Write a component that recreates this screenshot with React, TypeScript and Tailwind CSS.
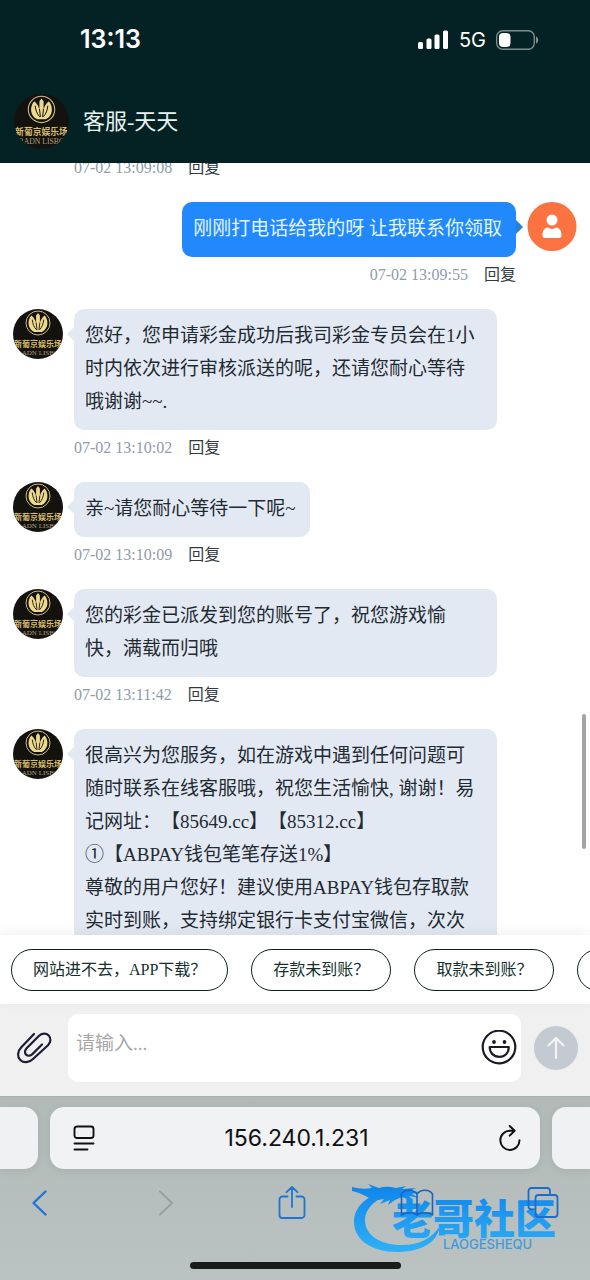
/**
 * Customer service chat, shown inside a mobile browser shell.
 */

import React from 'react';

type Message = {
    id: string;
    from: 'agent' | 'user';
    lines: string[];
    time: string;
};

const messages: Message[] = [
    {
        id: 'm1',
        from: 'user',
        lines: ['刚刚打电话给我的呀 让我联系你领取'],
        time: '07-02 13:09:55',
    },
    {
        id: 'm2',
        from: 'agent',
        lines: ['您好，您申请彩金成功后我司彩金专员会在1小时内依次进行审核派送的呢，还请您耐心等待哦谢谢~~.'],
        time: '07-02 13:10:02',
    },
    {
        id: 'm3',
        from: 'agent',
        lines: ['亲~请您耐心等待一下呢~'],
        time: '07-02 13:10:09',
    },
    {
        id: 'm4',
        from: 'agent',
        lines: ['您的彩金已派发到您的账号了，祝您游戏愉快，满载而归哦'],
        time: '07-02 13:11:42',
    },
    {
        id: 'm5',
        from: 'agent',
        lines: [
            '很高兴为您服务，如在游戏中遇到任何问题可随时联系在线客服哦，祝您生活愉快, 谢谢！易记网址：【85649.cc】【85312.cc】',
            '①【ABPAY钱包笔笔存送1%】',
            '尊敬的用户您好！建议使用ABPAY钱包存取款实时到账，支持绑定银行卡支付宝微信，次次',
        ],
        time: '',
    },
];

const quickQuestions = ['网站进不去，APP下载？', '存款未到账？', '取款未到账？'];

// ============================================================================
// AVATARS
// ============================================================================

function AgentAvatar({ className }: { className: string }) {
    return (
        <svg viewBox="0 0 50 50" className={`shrink-0 rounded-full ${className}`} aria-hidden="true">
            <defs>
                <linearGradient id="gold" x1="0" y1="0" x2="0" y2="1">
                    <stop offset="0" stopColor="#e9d48c" />
                    <stop offset="1" stopColor="#f0dc8e" />
                </linearGradient>
            </defs>
            <rect width="50" height="50" fill="#14120f" />
            <circle cx="25" cy="14" r="12" fill="none" stroke="#cdbb85" strokeWidth="1" />
            <path
                d="M18.300 6.500c-4.300 5-3.800 13.500 3 16.500h7.400c6.800-3 7.300-11.500 3-16.500-2.700 2-4 4.500-4.800 7.500V6.500L25 4l-1.900 2.500V14c-.8-3-2.100-5.500-4.800-7.500z"
                fill="url(#gold)"
            />
            <path
                d="M19.300 11c.4 4 1.600 7 3.900 9.500M30.700 11c-.4 4-1.600 7-3.900 9.500M23.200 14l.8 6.500M26.800 14l-.8 6.500"
                fill="none"
                stroke="#14120f"
                strokeWidth="0.900"
                strokeLinecap="round"
            />
            <text
                x="25"
                y="37.500"
                textAnchor="middle"
                fontSize="8"
                fill="#d8bd6c"
                className="font-['Noto_Sans_CJK_SC',sans-serif] font-bold"
            >
                新葡京娱乐场
            </text>
            <text
                x="25"
                y="45.500"
                textAnchor="middle"
                fontSize="7"
                fill="#b3a274"
                className="font-['Liberation_Serif',serif]"
            >
                RADN LISBO
            </text>
        </svg>
    );
}

function UserAvatar() {
    return (
        <svg viewBox="0 0 50 50" className="size-[50px] shrink-0" aria-hidden="true">
            <circle cx="25" cy="24.500" r="24.500" fill="#fb7340" />
            <circle cx="25" cy="18" r="5.500" fill="#fff" />
            <path d="M15.500 33c0-5 2.800-7.500 5.500-7.500 1 .9 2.400 1.400 4 1.400s3-.5 4-1.400c2.700 0 5.500 2.500 5.500 7.500 0 2-.8 3-2.500 3H18c-1.700 0-2.500-1-2.500-3z" fill="#fff" />
        </svg>
    );
}

// ============================================================================
// STATUS BAR + HEADER
// ============================================================================

function StatusBar() {
    return (
        <div className="flex h-20 items-center justify-between pr-[51px] pl-20 font-['Inter',sans-serif] text-white">
            <span className="text-[25px] font-semibold">13:13</span>
            <div className="flex items-center gap-[10px]">
                <svg viewBox="0 0 31 20" className="h-5 w-[31px]" fill="#fff" aria-hidden="true">
                    <rect x="0" y="12" width="5" height="7" rx="1.500" />
                    <rect x="8.500" y="8.500" width="5" height="10.500" rx="1.500" />
                    <rect x="16.500" y="4.500" width="5" height="14.500" rx="1.500" />
                    <rect x="25" y="0.500" width="5" height="18.500" rx="1.500" />
                </svg>
                <span className="text-xl">5G</span>
                <svg viewBox="0 0 43 20" className="h-5 w-[43px]" aria-hidden="true">
                    <rect x="0.700" y="0.700" width="37.600" height="18.600" rx="6" fill="none" stroke="#7c8d8c" strokeWidth="1.400" />
                    <path d="M40 6.500c3 1 3 6 0 7z" fill="#7c8d8c" />
                    <rect x="3" y="3" width="11.500" height="14" rx="4" fill="#fff" />
                </svg>
            </div>
        </div>
    );
}

function ChatHeader() {
    return (
        <header className="shrink-0 bg-[#042223]">
            <StatusBar />
            <div className="flex h-[83px] items-center gap-[14px] px-[14px]">
                <AgentAvatar className="size-[55px]" />
                <h1 className="text-[22px] text-[#e6f3ef]">客服-天天</h1>
            </div>
        </header>
    );
}

// ============================================================================
// MESSAGES
// ============================================================================

function MessageMeta({ time, align }: { time: string; align: string }) {
    return (
        <div className={`flex items-center gap-4 text-base leading-[22px] ${align}`}>
            <time className="text-[#8f9bab]">{time}</time>
            <button className="text-[#333b40]">回复</button>
        </div>
    );
}

function MessageRow({ message }: { message: Message }) {
    const isUser = message.from === 'user';

    return (
        <article className={`flex items-start gap-[11px] ${isUser ? 'flex-row-reverse' : ''}`}>
            {isUser ? <UserAvatar /> : <AgentAvatar className="size-[50px]" />}
            <div className="max-w-[423px] min-w-0">
                <div
                    className={`relative rounded-[10px] pt-[10px] pr-[14px] pb-3 pl-[11px] text-[19px] leading-[33px] ${isUser ? 'bg-[#2189fb] text-[#e2f6ff]' : 'bg-[#e3e9f2] text-[#1f2b33]'
                        }`}
                >
                    <span
                        className={`absolute top-[18px] border-y-[7px] border-transparent ${isUser ? 'left-full border-l-[7px] border-l-[#2b7fd6]' : 'right-full border-r-[7px] border-r-[#e3e9f2]'
                            }`}
                    />
                    {message.lines.map((line) => (
                        <p key={line}>{line}</p>
                    ))}
                </div>
                {message.time ? (
                    <div className="pt-[7px]">
                        <MessageMeta time={message.time} align={isUser ? 'justify-end' : ''} />
                    </div>
                ) : null}
            </div>
        </article>
    );
}

function MessageList() {
    return (
        <main className="relative min-h-0 flex-1 overflow-hidden bg-white">
            <div className="-mt-[6px] flex flex-col gap-[23px] px-[13px]">
                <div className="pl-[61px]">
                    <MessageMeta time="07-02 13:09:08" align="" />
                </div>
                {messages.map((message) => (
                    <MessageRow key={message.id} message={message} />
                ))}
            </div>
            <span className="absolute right-1 bottom-[86px] h-[135px] w-1 rounded-full bg-[#a3a3a3]" />
        </main>
    );
}

// ============================================================================
// QUICK QUESTIONS + COMPOSER
// ============================================================================

function QuickQuestions() {
    return (
        <nav
            aria-label="常见问题"
            className="relative flex shrink-0 gap-[23px] overflow-hidden bg-white pt-[14px] pb-[13px] pl-[11px] shadow-[0_-3px_12px_rgba(0,0,0,0.06)]"
        >
            {quickQuestions.map((question) => (
                <button
                    key={question}
                    className="h-[42px] shrink-0 rounded-full border border-[#10201f] px-[21px] text-base text-[#12302e]"
                >
                    {question}
                </button>
            ))}
            <button aria-label="更多" className="h-[42px] w-[140px] shrink-0 rounded-full border border-[#10201f]" />
        </nav>
    );
}

function Composer() {
    return (
        <form className="flex h-[92px] shrink-0 items-center bg-[#f0f0f0] pr-3 pb-1 pl-4" onSubmit={(e) => e.preventDefault()}>
            <button type="button" aria-label="附件" className="shrink-0">
                <svg
                    viewBox="0 0 36 34"
                    className="h-[34px] w-9"
                    fill="none"
                    stroke="#1d1d35"
                    strokeWidth="2.200"
                    strokeLinecap="round"
                    strokeLinejoin="round"
                >
                    <path d="M18 3 5.300 16.200c-4 4.200-4.200 9.600-1 12.800 3.300 3.200 8.700 3 12.700-1L32 14.200c3-3 3.200-7.200.7-9.800-2.600-2.600-6.900-2.400-9.900.6L10.600 17.300c-2 2-2.100 4.700-.5 6.300s4.300 1.400 6.300-.5L26 13.500" />
                </svg>
            </button>
            <div className="ml-4 flex h-[68px] flex-1 items-center rounded-[10px] bg-white pr-1 pl-2">
                <input
                    type="text"
                    aria-label="消息"
                    placeholder="请输入..."
                    className="h-full w-full min-w-0 flex-1 pb-2 text-[19px] outline-none placeholder:text-[#a6a6a6]"
                />
                <button type="button" aria-label="表情" className="shrink-0">
                    <svg viewBox="0 0 36 36" className="size-9" fill="none" stroke="#1b1b28" strokeWidth="2.200" strokeLinejoin="round">
                        <circle cx="18" cy="17" r="16.300" />
                        <circle cx="13" cy="12" r="1.900" fill="#1b1b28" stroke="none" />
                        <circle cx="23.500" cy="12" r="1.900" fill="#1b1b28" stroke="none" />
                        <path d="M8.700 17h19.100c0 6-4 9.800-9.500 9.800S8.700 23 8.700 17z" />
                    </svg>
                </button>
            </div>
            <button
                type="submit"
                aria-label="发送"
                className="ml-[13px] flex size-11 shrink-0 items-center justify-center rounded-full bg-[#c3cad2]"
            >
                <svg viewBox="0 0 24 24" className="size-6" fill="none" stroke="#f2f4f6" strokeWidth="2.200" strokeLinecap="round" strokeLinejoin="round">
                    <path d="M12 22V2M4.500 9.500 12 2l7.500 7.500" />
                </svg>
            </button>
        </form>
    );
}

// ============================================================================
// BROWSER CHROME
// ============================================================================

function AddressBar() {
    return (
        <div className="flex h-[62px] gap-3">
            <div className="w-[38px] shrink-0 rounded-r-[14px] bg-[#eff1f2] shadow-[0_2px_8px_rgba(0,0,0,0.08)]" />
            <div className="flex min-w-0 flex-1 items-center justify-between rounded-[14px] bg-[#f0f2f3] pr-[18px] pl-[23px] shadow-[0_2px_8px_rgba(0,0,0,0.08)]">
                <button aria-label="页面设置">
                    <svg viewBox="0 0 22 26" className="h-[26px] w-[22px]" fill="none" stroke="#111" strokeWidth="1.900" strokeLinecap="round">
                        <rect x="1.500" y="1.500" width="19" height="11.500" rx="2.500" />
                        <path d="M1.500 18.500h19M1.500 24.500h13" />
                    </svg>
                </button>
                <span className="font-['Inter',sans-serif] text-[23px] text-[#111]">156.240.1.231</span>
                <button aria-label="刷新">
                    <svg viewBox="0 0 24 26" className="h-[26px] w-6" fill="none" stroke="#111" strokeWidth="2" strokeLinecap="round" strokeLinejoin="round">
                        <path d="M21.500 15.200A9.600 9.600 0 1 1 12 5.700h4.500M11.700 1l4.900 4.700-4.900 4.900" />
                    </svg>
                </button>
            </div>
            <div className="w-[38px] shrink-0 rounded-l-[14px] bg-[#eff1f2] shadow-[0_2px_8px_rgba(0,0,0,0.08)]" />
        </div>
    );
}

function Watermark() {
    return (
        <div className="pointer-events-none absolute right-3 bottom-[26px] h-[72px] w-[226px]">
            <svg viewBox="0 0 226 72" className="size-full" aria-hidden="true">
                <defs>
                    <linearGradient id="wm" x1="0" y1="0" x2="0" y2="70" gradientUnits="userSpaceOnUse">
                        <stop offset="0.100" stopColor="#1187ec" />
                        <stop offset="1" stopColor="#2fb0f6" />
                    </linearGradient>
                </defs>
                <g fill="url(#wm)">
                    <path d="M50 7C20 8 2 22 2 40c0 18 18 30 43 30 22 0 40-8 43-26-8 12-20 19-38 19C28 63 13 53 13 38c0-10 8-19 22-25z" />
                    <path d="M0 5c8 2 13 2 20 1l-4-4 11 4c6-2 12-1 17 0l10-2-4 3 14-1-6 3 10 1-8 2 7 4-10-2 4 5-11-4-7 3-7 5 2-5-10 4 4-5-12 2c-4-5-12-8-20-10z" />
                    <text x="40" y="52" fontSize="41" className="font-['Noto_Sans_CJK_SC',sans-serif] font-black">
                        老哥社区
                    </text>
                </g>
                <text x="91" y="67" fontSize="13" fill="#3f9bdc" className="font-['Inter',sans-serif] font-medium">
                    LAOGESHEQU
                </text>
            </svg>
        </div>
    );
}

function BrowserToolbar() {
    return (
        <div className="relative flex items-center justify-between pt-4 pr-[30px] pl-[23px] text-[#1f74d4]">
            <button aria-label="后退" className="flex w-[34px] justify-center">
                <svg viewBox="0 0 18 36" className="h-9 w-[18px]" fill="none" stroke="currentColor" strokeWidth="2.400" strokeLinecap="round" strokeLinejoin="round">
                    <path d="M14.500 6.500 2.500 18l12 11.500" />
                </svg>
            </button>
            <button aria-label="前进" className="flex w-[34px] justify-center text-[#98a1a0]">
                <svg viewBox="0 0 18 36" className="h-9 w-[18px]" fill="none" stroke="currentColor" strokeWidth="2" strokeLinecap="round" strokeLinejoin="round">
                    <path d="m3 6.500 12 11.500-12 11.500" />
                </svg>
            </button>
            <button aria-label="分享" className="flex w-[34px] justify-center">
                <svg viewBox="0 0 28 36" className="h-9 w-7" fill="none" stroke="currentColor" strokeWidth="1.800" strokeLinecap="round" strokeLinejoin="round">
                    <path d="M9.500 11.500H4.500a3 3 0 0 0-3 3V30a3 3 0 0 0 3 3h19a3 3 0 0 0 3-3V14.500a3 3 0 0 0-3-3h-5M14 22V2M8.500 7.200 14 2l5.500 5.200" />
                </svg>
            </button>
            <button aria-label="书签" className="flex w-[34px] justify-center">
                <svg viewBox="0 0 34 36" className="h-9 w-[34px]" fill="none" stroke="#1a63bd" strokeWidth="1.600" strokeLinecap="round" strokeLinejoin="round">
                    <path d="M17 9v21c-4-3-11-3-15.500 0V9C5 4 13 4 17 9zM17 9c4-5 12-5 15.500 0v21c-4.500-3-11.500-3-15.500 0" />
                </svg>
            </button>
            <button aria-label="标签页" className="flex w-[34px] justify-center">
                <svg viewBox="0 0 32 36" className="h-9 w-8" fill="none" stroke="#1f6bc8" strokeWidth="1.800" strokeLinejoin="round">
                    <path d="M8.500 24.500H4.500a3 3 0 0 1-3-3V6a3 3 0 0 1 3-3H20a3 3 0 0 1 3 3v4" />
                    <rect x="8.500" y="10" width="22" height="22" rx="3" />
                </svg>
            </button>
        </div>
    );
}

function BrowserChrome() {
    return (
        <footer className="relative flex h-[184px] shrink-0 flex-col overflow-hidden border-t border-[#a9b1af] bg-linear-to-b from-[#b2bab8] to-[#bac3c1] pt-[10px]">
            <AddressBar />
            <Watermark />
            <BrowserToolbar />
            <span className="mx-auto mt-auto mb-[11px] h-[7px] w-[211px] rounded-full bg-[#1a1c1c]" />
        </footer>
    );
}

export default function App() {
    return (
        <div className="flex h-screen flex-col overflow-hidden bg-white font-['Liberation_Serif','Noto_Sans_CJK_SC',serif] [text-spacing-trim:space-all]">
            <ChatHeader />
            <MessageList />
            <QuickQuestions />
            <Composer />
            <BrowserChrome />
        </div>
    );
}
